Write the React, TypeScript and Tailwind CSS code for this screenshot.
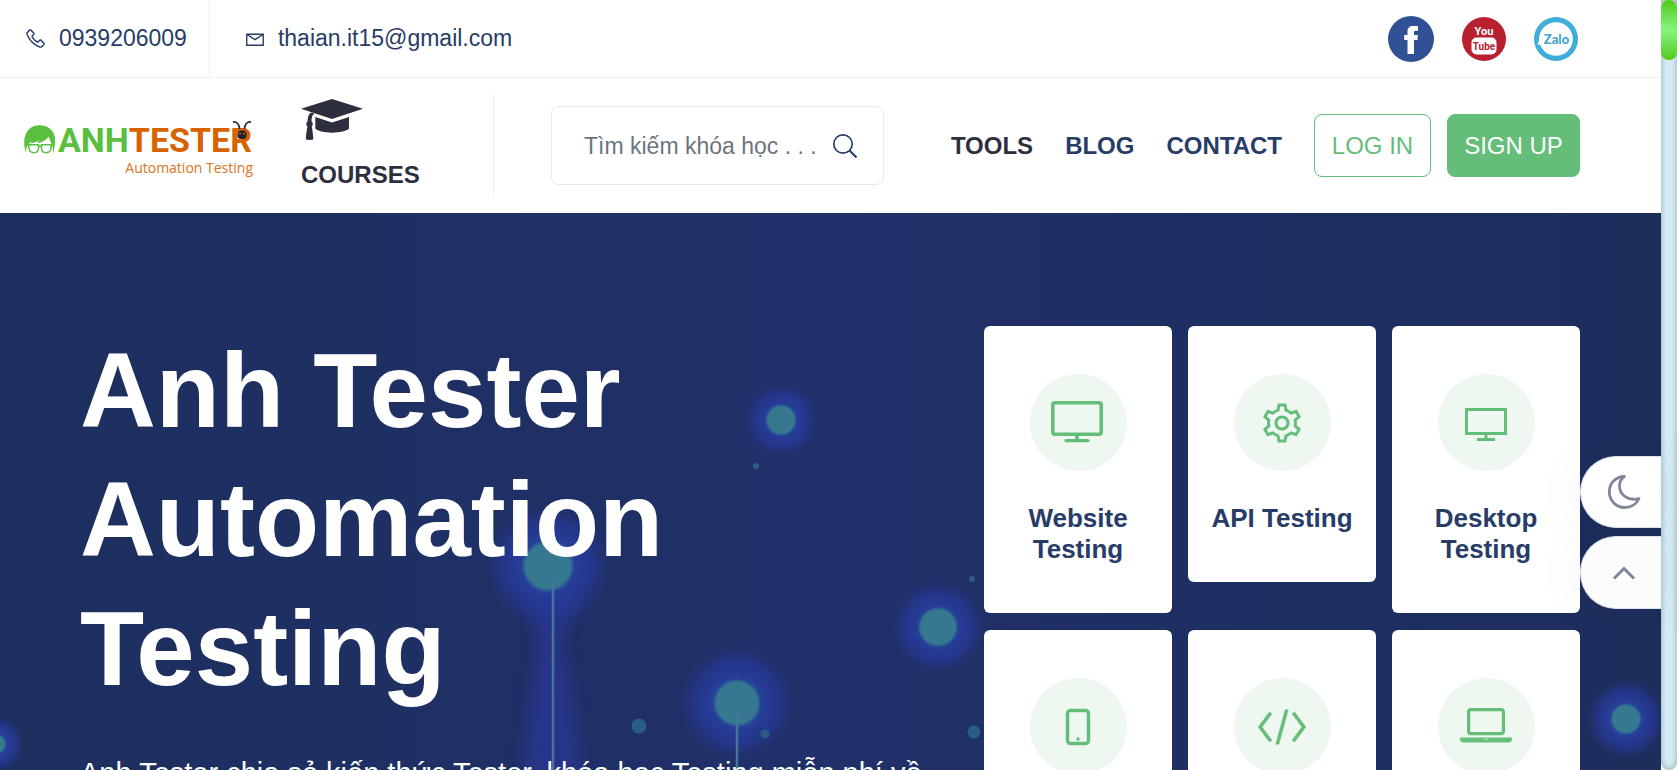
import React from "react";
import {
  LiaCodeSolid,
  LiaCogSolid,
  LiaDesktopSolid,
  LiaEnvelope,
  LiaMobileSolid,
  LiaPhoneSolid,
} from "react-icons/lia";

function TvIcon() {
  return (
    <svg width="56" height="54" viewBox="0 1 56 54" fill="none" stroke="currentColor" aria-hidden="true">
      <rect x="2.800" y="7.800" width="48.400" height="31.400" rx="2.200" strokeWidth="3.600" />
      <path d="M27 39v6" strokeWidth="3.600" />
      <path d="M16 45.600h22" strokeWidth="3.200" strokeLinecap="round" />
    </svg>
  );
}

function LaptopIcon() {
  return (
    <svg width="54" height="54" viewBox="0 0 54 54" fill="none" aria-hidden="true">
      <rect x="9.600" y="9.600" width="34.800" height="24" rx="2.400" stroke="currentColor" strokeWidth="3.200" />
      <path d="M1 37.400h52v1.400a3.600 3.600 0 0 1-3.600 3.600H4.600A3.600 3.600 0 0 1 1 38.800z" fill="currentColor" />
      <rect x="24.500" y="38.600" width="5" height="1.600" rx=".8" fill="#a5d9b4" />
    </svg>
  );
}

const topics = [
  { title: "Website Testing", icon: <TvIcon /> },
  { title: "API Testing", icon: <LiaCogSolid size={48} strokeWidth={0} /> },
  { title: "Desktop Testing", icon: <LiaDesktopSolid size={48} strokeWidth={0} /> },
  { title: "Mobile Testing", icon: <LiaMobileSolid size={48} strokeWidth={0.3} /> },
  { title: "Programming", icon: <LiaCodeSolid size={50} strokeWidth={0.3} /> },
  { title: "Computer Skills", icon: <LaptopIcon /> },
];

const glows = [
  { x: 781, y: 207, r: 14, g: 37 },
  { x: 548, y: 353, r: 23.5, g: 62 },
  { x: 938, y: 414, r: 18, g: 46 },
  { x: 737, y: 490, r: 21.5, g: 57 },
  { x: 1626, y: 506, r: 14, g: 39 },
  { x: -4, y: 531, r: 9, g: 28 },
];

const dots = [
  { x: 756, y: 253, r: 3 },
  { x: 972, y: 366, r: 3 },
  { x: 639, y: 513, r: 7.5 },
  { x: 765, y: 521, r: 4.5 },
  { x: 974, y: 519, r: 6.5 },
];

function HeroBackdrop() {
  return (
    <svg
      className="absolute inset-0 h-full w-full"
      viewBox="0 0 1661 557"
      preserveAspectRatio="xMinYMin slice"
      aria-hidden="true"
    >
      <defs>
        <radialGradient id="halo">
          <stop offset="0" stopColor="#274ca0" />
          <stop offset=".38" stopColor="#26449a" />
          <stop offset=".5" stopColor="#263b96" />
          <stop offset=".72" stopColor="#263896" stopOpacity=".75" />
          <stop offset="1" stopColor="#24358a" stopOpacity="0" />
        </radialGradient>
        <radialGradient id="core">
          <stop offset="0" stopColor="#36788f" />
          <stop offset=".82" stopColor="#36788f" />
          <stop offset=".9" stopColor="#2f6892" stopOpacity=".8" />
          <stop offset="1" stopColor="#294f98" stopOpacity="0" />
        </radialGradient>
        <filter id="soft" x="-50%" y="-20%" width="200%" height="140%">
          <feGaussianBlur stdDeviation="8" />
        </filter>
      </defs>
      <path d="M528 380h50q-22 50-12 70 10 50 14 120h-56q4-70 12-120 4-20-8-70z" fill="#26389a" fillOpacity=".7" filter="url(#soft)" />
      {glows.map((n) => (
        <g key={n.x}>
          <circle cx={n.x} cy={n.y} r={n.g} fill="url(#halo)" />
          <circle cx={n.x} cy={n.y} r={n.r * 1.15} fill="url(#core)" />
        </g>
      ))}
      {dots.map((n) => (
        <circle key={n.x} cx={n.x} cy={n.y} r={n.r} fill="#2b5c86" />
      ))}
      <path d="M553 365v192M737 500v57" stroke="#47749b" strokeWidth="2.500" />
    </svg>
  );
}

function Logo() {
  return (
    <a href="#home" className="flex w-[229px] shrink-0 flex-col pt-2" aria-label="Anh Tester">
      <span className="flex items-center">
        <svg width="32" height="32" viewBox="0 0 32 32" fill="none" aria-hidden="true">
          <path
            d="M1.800 28.500C.6 24 0 20 .3 16.500 1 7 7 1.200 15.500 1.200 24.500 1.200 31 7 31 16c0 4.500-.6 9-1.800 13.500-.1-4.500-.5-8-2.200-11-1.200-2-1.500-4-2.200-6-2.500 3.500-7 6-12 6.800l3-3.300c-3 2-6 3-9.800 3.500l3-2.500c-4 2-6.500 4-7.200 11.500z"
            fill="#59bf3c"
          />
          <path
            d="M4.500 20.800h10v3.200c0 3-1.800 4.700-4.600 4.700-3 0-4.700-1.700-4.900-4.700zM17.500 20.800h10l-.5 3.200c-.3 3-2 4.700-4.900 4.700-2.800 0-4.600-1.700-4.600-4.700zM14.500 22.200h3M2 20.800h3M27 20.800h3"
            stroke="#59bf3c"
            strokeWidth="1.500"
          />
        </svg>
        <span className="relative ml-0.5 flex font-[Roboto] text-[34px] leading-9 font-bold">
          <span className="text-[#59bf3c]">ANH</span>
          <span className="text-[#d96200]">TESTER</span>
          <svg
            className="absolute -top-0.5 right-0"
            width="20"
            height="22"
            viewBox="0 0 20 22"
            fill="none"
            aria-hidden="true"
          >
            <path d="M1 2q6-.5 6.500 7M19 2q-6-.5-6.500 7" stroke="#2b2b2b" strokeWidth="1.800" />
            <rect x="5.500" y="10.500" width="9" height="8.500" rx="3.500" fill="#242424" />
            <circle cx="8" cy="13.500" r="1" fill="#d96200" />
            <circle cx="12" cy="13.500" r="1" fill="#d96200" />
          </svg>
        </span>
      </span>
      <span className="self-end font-['Open_Sans'] text-[14px] leading-5 text-[#dc7420]">Automation Testing</span>
    </a>
  );
}

function TopBar() {
  return (
    <div className="flex h-[78px] items-stretch border-b border-[#f1f1f4] text-[23px] text-[#273c66]">
      <a href="tel:0939206009" className="flex items-center gap-3 border-r border-[#f1f1f4] pr-[22px] pl-6">
        <LiaPhoneSolid size={23} strokeWidth={0} />
        0939206009
      </a>
      <a href="mailto:thaian.it15@gmail.com" className="flex items-center gap-3 pl-[34px]">
        <LiaEnvelope size={22} strokeWidth={0} />
        thaian.it15@gmail.com
      </a>
      <div className="ml-auto flex items-center gap-7 pr-[83px]">
        <a href="#facebook" aria-label="Facebook">
          <svg width="46" height="46" viewBox="0 0 46 46" aria-hidden="true">
            <circle cx="23" cy="23" r="23" fill="#305196" />
            <path
              d="M19.500 38V24h-3.300v-5h3.300v-3.500c0-3.500 2-5.500 5.500-5.500H30v4.700h-2.200c-1.300 0-1.800.5-1.800 1.800V19h4l-.6 5H26v14z"
              fill="#fff"
            />
          </svg>
        </a>
        <a href="#youtube" aria-label="YouTube">
          <svg width="44" height="44" viewBox="0 0 44 44" aria-hidden="true">
            <circle cx="22" cy="22" r="22" fill="#b8202f" />
            <rect x="9.500" y="20.500" width="25" height="17" rx="5" fill="#fff" />
            <text x="22" y="17.500" textAnchor="middle" fontSize="11" fontWeight="700" fontFamily="Roboto, sans-serif" fill="#fff">
              You
            </text>
            <text x="22" y="33" textAnchor="middle" fontSize="10" fontWeight="700" fontFamily="Roboto, sans-serif" fill="#b8202f">
              Tube
            </text>
          </svg>
        </a>
        <a href="#zalo" aria-label="Zalo">
          <svg width="44" height="44" viewBox="0 0 44 44" aria-hidden="true">
            <circle cx="22" cy="22" r="22" fill="#3fadd9" />
            <circle cx="22" cy="22" r="16.800" fill="#fff" />
            <path d="M5.500 19c0 4-.5 6-2.500 8.500 2.500.3 4-.2 5.500-1z" fill="#fff" />
            <text x="22.500" y="26.500" textAnchor="middle" fontSize="13" fontWeight="900" fontFamily="Lato, sans-serif" fill="#3fa6d2">
              Zalo
            </text>
          </svg>
        </a>
      </div>
    </div>
  );
}

function Header() {
  return (
    <header className="flex h-[135px] items-center pr-[81px] pl-6 text-2xl">
      <Logo />
      <a
        href="#courses"
        className="ml-12 flex h-[102px] w-[193px] shrink-0 flex-col justify-between border-r border-[#eeeef2] pt-1 font-bold text-[#2d2f3e]"
      >
        <svg width="63" height="42" viewBox="11 9 63 42" fill="currentColor" aria-hidden="true">
          <path d="M11 18.700 42 9l31 9.700L42 29z" />
          <path d="M25.300 27 42 32.600 59 27v11.500C54 44 30 44 25.300 38.500z" />
          <path d="M21 22.500l3.500 1c-2.300 1.500-3 4-3 8a3.200 3.200 0 0 1 .2 5c.9 4 1.400 8.500 1.600 13-2 .5-5 .5-7.500 0 .2-4.500.8-9 1.700-13a3.200 3.200 0 0 1 0-5c.2-4 1-7.500 3.500-9z" />
        </svg>
        <span className="leading-11">COURSES</span>
      </a>
      <form
        role="search"
        onSubmit={(e) => e.preventDefault()}
        className="ml-[57px] flex h-[79px] w-[333px] items-center rounded-lg border border-[#e8e8ec] pr-[22px] pl-8"
      >
        <input
          type="text"
          aria-label="Tìm kiếm khóa học"
          placeholder="Tìm kiếm khóa học . . ."
          className="min-w-0 flex-1 text-[23px] leading-9 outline-none placeholder:text-[#6c757d] placeholder:opacity-100"
        />
        <button type="submit" aria-label="Search" className="p-1 text-[#273c66]">
          <svg width="26" height="26" viewBox="0 0 26 26" fill="none" stroke="currentColor" strokeWidth="1.700" aria-hidden="true">
            <circle cx="12" cy="11" r="9.200" />
            <path d="m18.500 17.500 7 7" strokeWidth="2" />
          </svg>
        </button>
      </form>
      <nav className="ml-auto flex items-center gap-8 font-bold text-[#273c66]">
        <a href="#tools" className="text-[#2d2f3e]">
          TOOLS
        </a>
        <a href="#blog">BLOG</a>
        <a href="#contact">CONTACT</a>
      </nav>
      <div className="ml-8 flex gap-4">
        <button type="button" className="h-[63px] w-[117px] rounded-lg border border-[#64bd79] text-[#64bd79]">
          LOG IN
        </button>
        <button type="button" className="h-[63px] w-[133px] rounded-lg border border-[#64bd79] bg-[#64bd79] text-white">
          SIGN UP
        </button>
      </div>
    </header>
  );
}

function Hero() {
  return (
    <section className="relative flex-1 overflow-hidden bg-linear-to-r from-[#1d2f5e] via-[#203069] to-[#1d2e5d]">
      <HeroBackdrop />
      <div className="relative flex items-start justify-between pt-[113px] pr-[81px] pl-20 text-white">
        <div className="w-[872px]">
          <h1 className="w-[700px] text-[105px] leading-[129px] font-bold">Anh Tester Automation Testing</h1>
          <p className="mt-10 text-[29px] leading-10">
            Anh Tester chia sẻ kiến thức Tester, khóa học Testing miễn phí về Manual và Automation
          </p>
        </div>
        <div className="grid w-[596px] grid-cols-3 items-start gap-x-4 gap-y-[17px]">
          {topics.map((t) => (
            <a
              key={t.title}
              href="#topics"
              className="flex flex-col items-center rounded-md bg-white px-4 py-12 text-center text-[26px] leading-[31px] font-bold text-[#273c66]"
            >
              <span className="mb-8 flex size-[97px] items-center justify-center rounded-full bg-[#eef8f1] text-[#64bd79]">
                {t.icon}
              </span>
              {t.title}
            </a>
          ))}
        </div>
      </div>
    </section>
  );
}

function SideActions() {
  return (
    <div className="absolute top-[456px] right-4 flex w-[81px] flex-col gap-2 text-[#808798]">
      <button
        type="button"
        aria-label="Dark mode"
        className="flex h-[72px] items-center justify-center rounded-l-[36px] border border-r-0 border-[#dfe0ea] bg-white pl-1.5 shadow-[0_0_60px_rgba(20,20,40,0.05)]"
      >
        <svg
          width="36"
          height="36"
          viewBox="0 0 36 36"
          fill="none"
          stroke="currentColor"
          strokeWidth="2.800"
          strokeLinejoin="round"
          aria-hidden="true"
        >
          <path d="M18.500 2.500C9.500 2.700 3.300 9.500 3.300 17.700c0 9 7 15.800 15.200 15.800 6.500 0 12-3.600 14.500-9C22 27.500 13.500 20.500 13.500 12c0-3.700 1.700-7.300 5-9.500z" />
        </svg>
      </button>
      <button
        type="button"
        aria-label="Back to top"
        className="flex h-[73px] items-center justify-center rounded-l-[36px] border border-r-0 border-[#dfe0ea] bg-[#fcfcfd] pl-1.5 shadow-[0_0_60px_rgba(20,20,40,0.05)]"
      >
        <svg width="26" height="16" viewBox="0 0 26 16" fill="none" stroke="currentColor" strokeWidth="3" aria-hidden="true">
          <path d="m3 13.500 10-10 10 10" />
        </svg>
      </button>
    </div>
  );
}

export default function App() {
  return (
    <div className="relative flex h-screen overflow-hidden bg-white font-['Liberation_Sans',Arial,sans-serif]">
      <main className="flex min-w-0 flex-1 flex-col">
        <TopBar />
        <Header />
        <Hero />
      </main>
      <SideActions />
      <div className="w-4 shrink-0 rounded-b-full bg-[#d6eef3] shadow-[inset_0_0_6px_rgba(80,90,110,0.5)]">
        <div className="h-15 rounded-full bg-linear-to-b from-[#4fcb00] via-[#86f57a] to-[#4fcb00]" />
      </div>
    </div>
  );
}
